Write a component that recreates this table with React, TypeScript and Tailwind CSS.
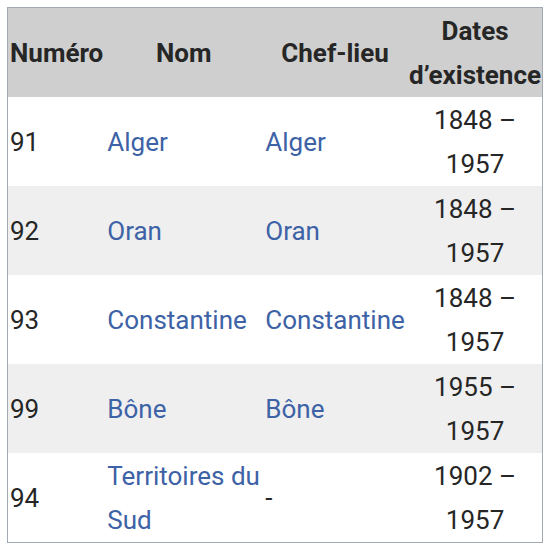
const rows = [
  { num: '91', nom: 'Alger', chef: 'Alger', start: '1848', end: '1957', shade: false },
  { num: '92', nom: 'Oran', chef: 'Oran', start: '1848', end: '1957', shade: true },
  { num: '93', nom: 'Constantine', chef: 'Constantine', start: '1848', end: '1957', shade: false },
  { num: '99', nom: 'Bône', chef: 'Bône', start: '1955', end: '1957', shade: true },
  { num: '94', nom: 'Territoires du Sud', chef: '-', start: '1902', end: '1957', shade: false },
];

export default function App() {
  return (
    <div className="w-[550px] h-[550px] bg-white pt-[7px] pl-[7px]" style={{ fontFamily: 'Roboto, "Noto Sans", sans-serif' }}>
      <table className="table-fixed border-collapse border border-[#a2a9b1] text-[26px] leading-[44px] text-[#262626]">
        <colgroup>
          <col className="w-[97px]" />
          <col className="w-[157px]" />
          <col className="w-[144px]" />
          <col className="w-[135px]" />
        </colgroup>
        <thead>
          <tr className="h-[89px] bg-[#cfcfcf] font-bold">
            <th className="px-[2px] pt-[1px] text-left align-middle">Numéro</th>
            <th className="px-[2px] pt-[1px] text-center align-middle">Nom</th>
            <th className="px-[2px] pt-[1px] text-center align-middle">Chef-lieu</th>
            <th className="px-0 pt-[1px] text-center align-middle">Dates d’existence</th>
          </tr>
        </thead>
        <tbody>
          {rows.map((r) => (
            <tr key={r.num} className={r.shade ? 'h-[89px] bg-[#efefef]' : 'h-[89px] bg-white'}>
              <td className="px-[2px] pt-[1px] align-middle">{r.num}</td>
              <td className="px-[2px] pt-[1px] align-middle text-[#3d62a6]">{r.nom}</td>
              <td className={r.chef === '-' ? 'px-[3px] pt-[1px] align-middle' : 'px-[3px] pt-[1px] align-middle text-[#3d62a6]'}>{r.chef}</td>
              <td className="px-[2px] pt-[1px] align-middle text-center">
                {r.start} – {r.end}
              </td>
            </tr>
          ))}
        </tbody>
      </table>
    </div>
  );
}
